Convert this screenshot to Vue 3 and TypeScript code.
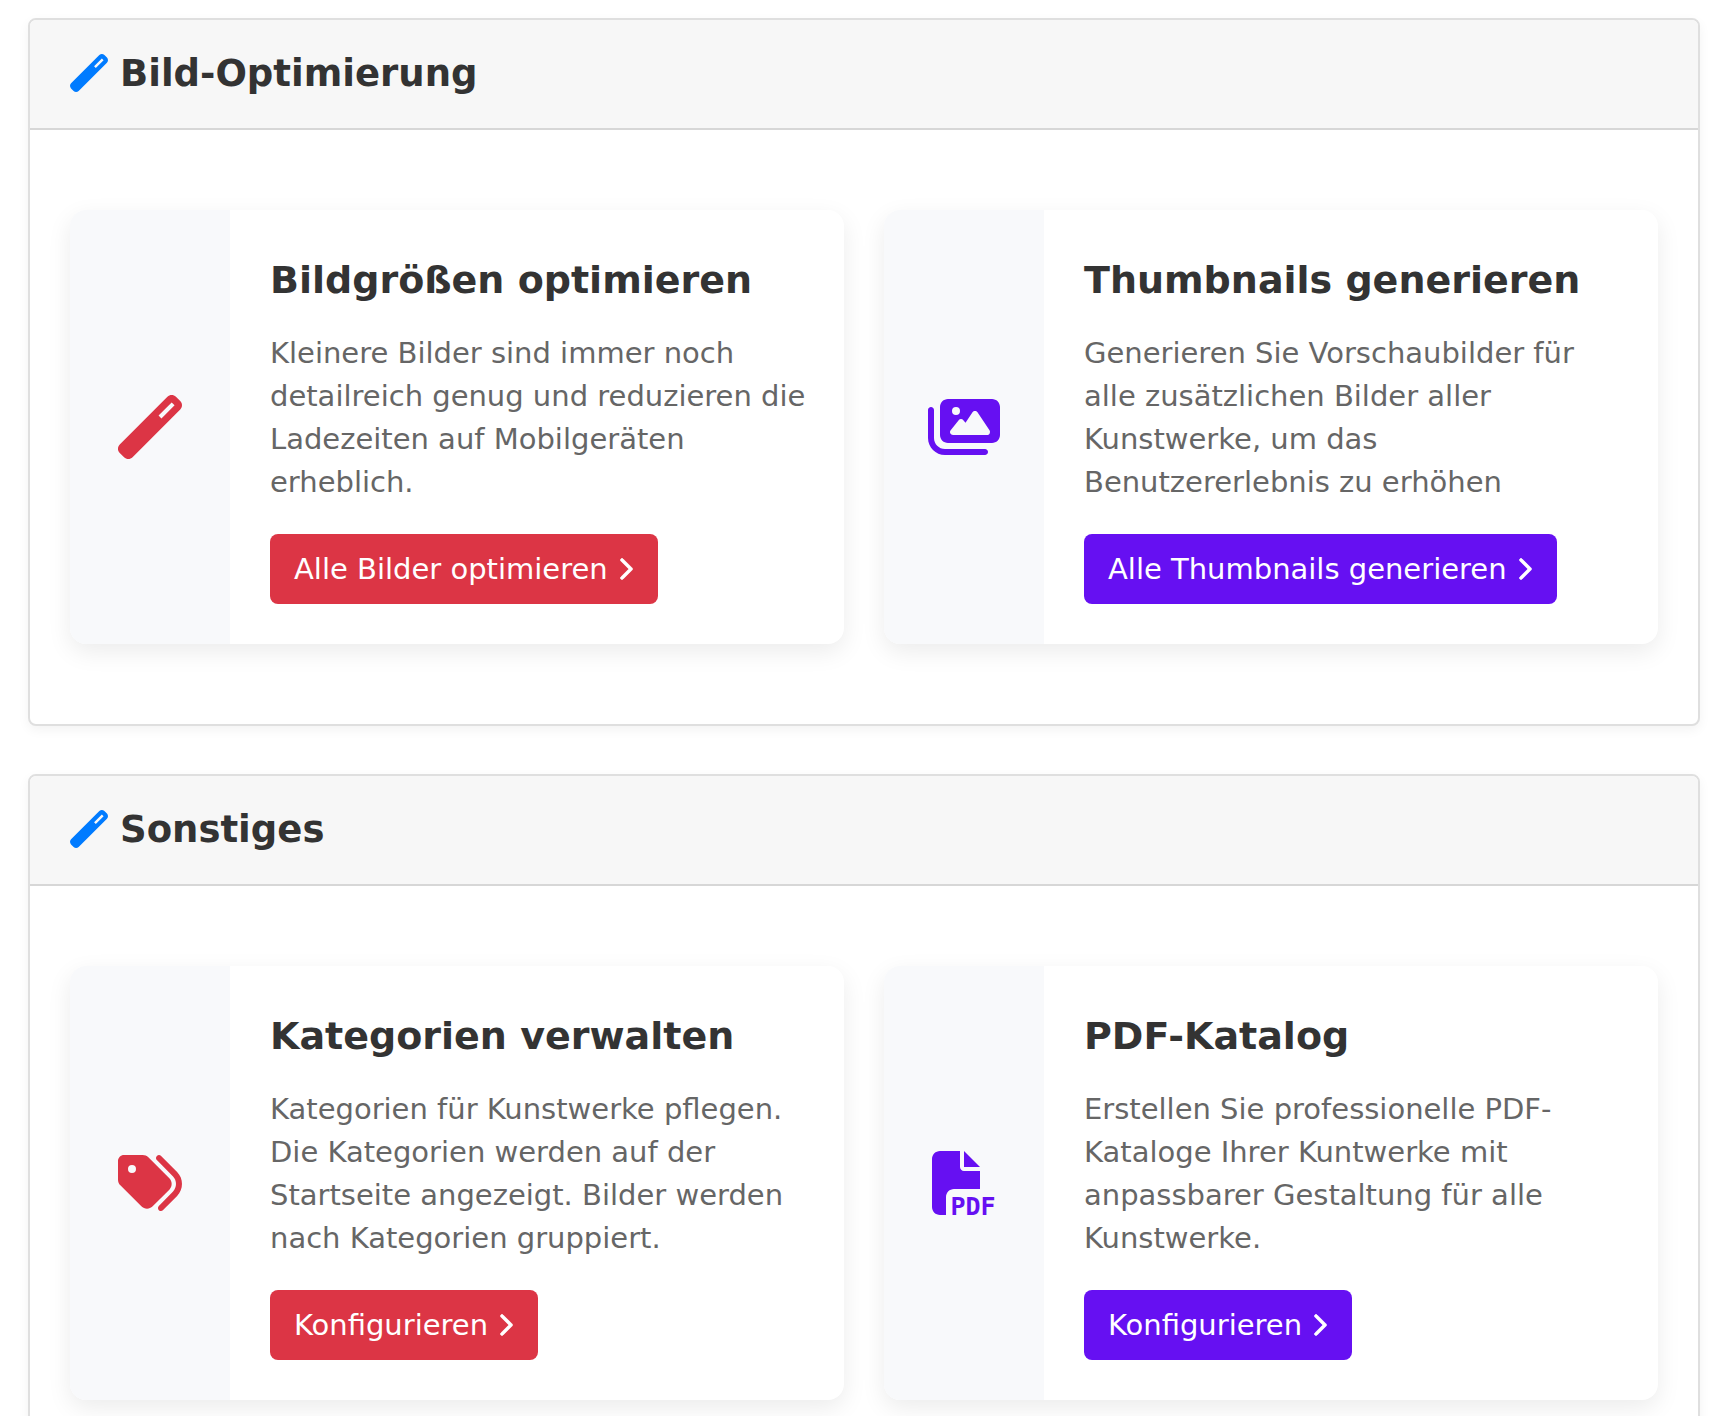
<script setup lang="ts">
type IconName = 'wand' | 'images' | 'tags' | 'pdf'
type Tone = 'red' | 'purple'

interface Tool {
  title: string
  text: string
  action: string
  icon: IconName
  tone: Tone
}

interface Group {
  id: string
  title: string
  tools: Tool[]
}

const icons: Record<IconName, { box: string; path: string; label?: string }> = {
  wand: {
    box: '0 0 512 512',
    path: 'M14.1 463.3c-18.7-18.7-18.7-49.1 0-67.9L395.4 14.1c18.7-18.7 49.1-18.7 67.9 0l34.6 34.6c18.7 18.7 18.7 49.1 0 67.9L116.5 497.9c-18.7 18.7-49.1 18.7-67.9 0L14.1 463.3zM347.6 187.6l105-105L429.4 59.3l-105 105 23.3 23.3z',
  },
  images: {
    box: '0 0 576 512',
    path: 'M160 32c-35.3 0-64 28.7-64 64V320c0 35.3 28.7 64 64 64H512c35.3 0 64-28.7 64-64V96c0-35.3-28.7-64-64-64H160zM396 138.7l96 144c4.9 7.4 5.4 16.8 1.2 24.6S480.9 320 472 320H328 280 200c-9.2 0-17.6-5.3-21.6-13.6s-2.9-18.2 2.9-25.4l64-80c4.6-5.7 11.4-9 18.7-9s14.2 3.3 18.7 9l17.3 21.6 56-84C360.5 132 368 128 376 128s15.5 4 20 10.7zM192 128a32 32 0 1 1 64 0 32 32 0 1 1 -64 0zM48 120c0-13.3-10.7-24-24-24S0 106.7 0 120V344c0 75.1 60.9 136 136 136H456c13.3 0 24-10.7 24-24s-10.7-24-24-24H136c-48.6 0-88-39.4-88-88V120z',
  },
  tags: {
    box: '0 0 512 512',
    path: 'M345 39.1L472.8 168.4c52.4 53 52.4 138.2 0 191.2L360.8 472.9c-9.3 9.4-24.5 9.5-33.9 .2s-9.5-24.5-.2-33.9L438.6 325.9c33.9-34.3 33.9-89.4 0-123.7L310.9 72.9c-9.3-9.4-9.2-24.6 .2-33.9s24.6-9.2 33.9 .2zM0 229.5V80C0 53.5 21.5 32 48 32H197.5c17 0 33.3 6.7 45.3 18.7l168 168c25 25 25 65.5 0 90.5L277.3 442.7c-25 25-65.5 25-90.5 0l-168-168C6.7 262.7 0 246.5 0 229.5zM144 144a32 32 0 1 0 -64 0 32 32 0 1 0 64 0z',
  },
  pdf: {
    box: '0 0 512 512',
    path: 'M0 64C0 28.7 28.7 0 64 0H224V128c0 17.7 14.3 32 32 32H384V304H176c-35.3 0-64 28.7-64 64V512H64c-35.3 0-64-28.7-64-64V64zm384 64H256V0L384 128z',
    label: 'PDF',
  },
}

const groups: Group[] = [
  {
    id: 'bild-optimierung',
    title: 'Bild-Optimierung',
    tools: [
      {
        title: 'Bildgrößen optimieren',
        text: 'Kleinere Bilder sind immer noch detailreich genug und reduzieren die Ladezeiten auf Mobilgeräten erheblich.',
        action: 'Alle Bilder optimieren',
        icon: 'wand',
        tone: 'red',
      },
      {
        title: 'Thumbnails generieren',
        text: 'Generieren Sie Vorschaubilder für alle zusätzlichen Bilder aller Kunstwerke, um das Benutzererlebnis zu erhöhen',
        action: 'Alle Thumbnails generieren',
        icon: 'images',
        tone: 'purple',
      },
    ],
  },
  {
    id: 'sonstiges',
    title: 'Sonstiges',
    tools: [
      {
        title: 'Kategorien verwalten',
        text: 'Kategorien für Kunstwerke pflegen. Die Kategorien werden auf der Startseite angezeigt. Bilder werden nach Kategorien gruppiert.',
        action: 'Konfigurieren',
        icon: 'tags',
        tone: 'red',
      },
      {
        title: 'PDF-Katalog',
        text: 'Erstellen Sie professionelle PDF-Kataloge Ihrer Kuntwerke mit anpassbarer Gestaltung für alle Kunstwerke.',
        action: 'Konfigurieren',
        icon: 'pdf',
        tone: 'purple',
      },
    ],
  },
]
</script>

<template>
  <main class="page">
    <section v-for="group in groups" :key="group.id" class="group" :aria-labelledby="group.id">
      <header class="group-header">
        <svg class="group-icon" :viewBox="icons.wand.box" aria-hidden="true">
          <path :d="icons.wand.path" />
        </svg>
        <h2 :id="group.id" class="group-title">{{ group.title }}</h2>
      </header>
      <div class="group-body">
        <article v-for="tool in group.tools" :key="tool.title" class="tool" :class="tool.tone">
          <div class="tool-side">
            <svg class="tool-icon" :viewBox="icons[tool.icon].box" aria-hidden="true">
              <path :d="icons[tool.icon].path" />
              <text v-if="icons[tool.icon].label" class="tool-icon-label" x="148" y="510">{{ icons[tool.icon].label }}</text>
            </svg>
          </div>
          <div class="tool-content">
            <h3 class="tool-title">{{ tool.title }}</h3>
            <p class="tool-text">{{ tool.text }}</p>
            <a class="tool-action" href="#">
              <span>{{ tool.action }}</span>
              <svg class="chevron" viewBox="0 0 320 512" aria-hidden="true">
                <path
                  d="M310.6 233.4c12.5 12.5 12.5 32.8 0 45.3l-192 192c-12.5 12.5-32.8 12.5-45.3 0s-12.5-32.8 0-45.3L242.7 256 73.4 86.6c-12.5-12.5-12.5-32.8 0-45.3s32.8-12.5 45.3 0l192 192z"
                />
              </svg>
            </a>
          </div>
        </article>
      </div>
    </section>
  </main>
</template>

<style>
body {
  margin: 0;
  background: #fff;
}
</style>

<style scoped>
.page {
  box-sizing: border-box;
  height: 100vh;
  overflow: hidden;
  padding: 18px 12px 0 28px;
  font-family: 'DejaVu Sans', sans-serif;
  color: #333;
}

.group {
  margin-bottom: 48px;
  border: 2px solid #dfdfdf;
  border-radius: 8px;
  background: #fff;
  box-shadow: 0 4px 12px rgba(0, 0, 0, 0.05);
}

.group-header {
  display: flex;
  align-items: center;
  gap: 12px;
  padding: 25px 40px;
  border-bottom: 2px solid #d7d7d7;
  border-radius: 6px 6px 0 0;
  background: #f7f7f7;
}

.group-icon {
  width: 38px;
  height: 38px;
  margin-bottom: 2px;
  fill: #007bff;
}

.group-title {
  margin: 0;
  font-size: 37px;
  line-height: 58px;
  font-weight: 700;
}

.group-body {
  display: grid;
  grid-template-columns: 1fr 1fr;
  gap: 40px;
  padding: 80px 40px;
}

.tool {
  display: flex;
  overflow: hidden;
  border-radius: 16px;
  background: #fff;
  box-shadow: 0 8px 24px rgba(0, 0, 0, 0.08);
}

.red {
  --tone: #dc3545;
}

.purple {
  --tone: #6610f2;
}

.tool-side {
  display: flex;
  flex: 0 0 160px;
  align-items: center;
  justify-content: center;
  background: #f8f9fb;
}

.tool-icon {
  height: 64px;
  overflow: visible;
  fill: var(--tone);
}

.tool-icon-label {
  font-family: 'Liberation Sans Narrow', 'DejaVu Sans Mono', monospace;
  font-size: 200px;
  font-weight: 700;
}

.tool-content {
  flex: 1;
  min-width: 0;
  padding: 40px 32px 40px 40px;
}

.tool-title {
  margin: 0 0 22px;
  font-size: 38px;
  line-height: 60px;
  font-weight: 700;
}

.tool-text {
  margin: 0 0 30px;
  font-size: 29px;
  line-height: 43px;
  color: #666;
}

.tool-action {
  display: inline-flex;
  box-sizing: border-box;
  height: 70px;
  align-items: center;
  gap: 8px;
  padding: 0 24px;
  border-radius: 8px;
  background: var(--tone);
  color: #fff;
  font-size: 29px;
  line-height: 43px;
  text-decoration: none;
  vertical-align: top;
}

.chevron {
  width: 18px;
  height: 24px;
  fill: currentColor;
  stroke: currentColor;
  stroke-width: 16px;
}
</style>
